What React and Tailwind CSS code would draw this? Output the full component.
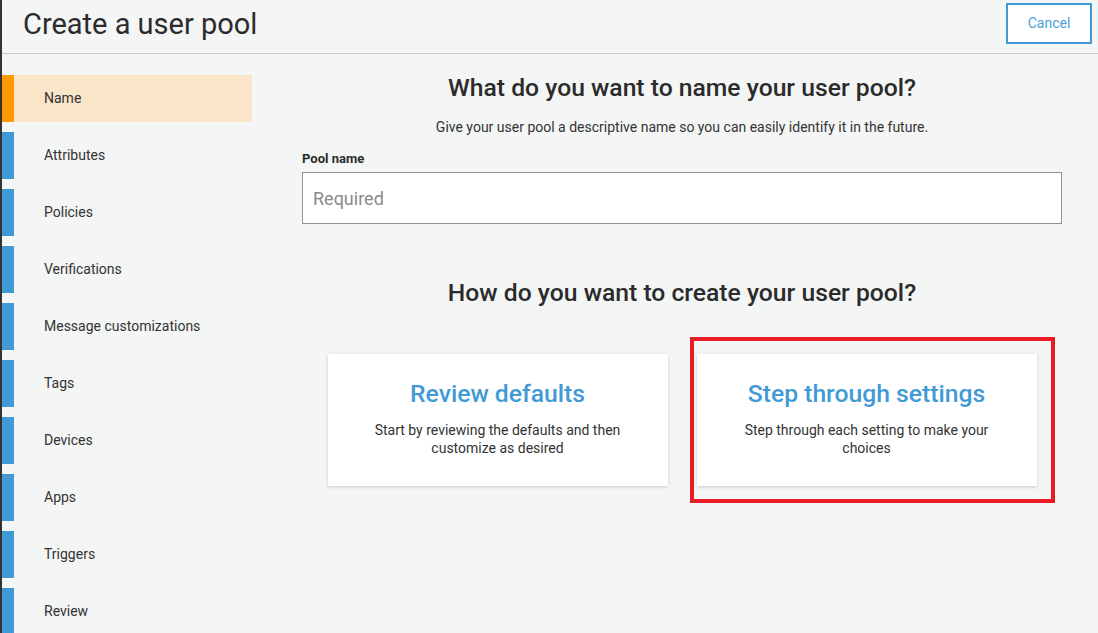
import React from 'react';

const steps = [
    'Name',
    'Attributes',
    'Policies',
    'Verifications',
    'Message customizations',
    'Tags',
    'Devices',
    'Apps',
    'Triggers',
    'Review',
];

const StepItem = ({ label, active }) => (
    <div className={`flex h-[47px] shrink-0 ${active ? 'bg-[#f9e5c8]' : ''}`}>
        <div className={`w-[12px] ${active ? 'bg-[#ff9900]' : 'bg-[#3f9ad6]'}`} />
        <div className="flex items-center pl-[30px] text-[14px] text-[#333333]">{label}</div>
    </div>
);

const OptionCard = ({ title, text }) => (
    <div className="w-[340px] h-[132px] bg-white shadow-[0_1px_3px_rgba(0,0,0,0.18)] flex flex-col items-center pt-[26px] text-center">
        <div className="text-[24.7px] leading-[28px] font-medium text-[#3f9ad6]">{title}</div>
        <p className="mt-[13px] w-[270px] text-[14px] leading-[18px] text-[#333333]">{text}</p>
    </div>
);

const App = () => {
    return (
        <div className="w-[1098px] h-[633px] overflow-hidden bg-[#f4f5f5] border-l-2 border-[#333333] font-['Roboto','Liberation_Sans',sans-serif]">
            <header className="h-[54px] flex items-start justify-between border-b border-[#cccccc] pl-[21px] pr-[6px]">
                <h1 className="mt-[6px] text-[29px] leading-[36px] text-[#2b2b2b]">Create a user pool</h1>
                <button className="mt-[3px] w-[86px] h-[41px] bg-white border-2 border-[#3f9ad6] text-[14px] text-[#4a9fd8]">
                    Cancel
                </button>
            </header>

            <div className="flex">
                {/* left step list */}
                <nav className="w-[250px] mt-[21px] flex flex-col gap-[10px]">
                    {steps.map((s, i) => (
                        <StepItem key={s} label={s} active={i === 0} />
                    ))}
                </nav>

                <main className="pl-[50px] w-[810px] flex flex-col">
                    <h2 className="mt-[20px] text-center text-[24.7px] leading-[28px] font-medium text-[#2b2b2b]">
                        What do you want to name your user pool?
                    </h2>
                    <p className="mt-[16px] text-center text-[14px] leading-[18px] text-[#333333]">
                        Give your user pool a descriptive name so you can easily identify it in the future.
                    </p>
                    <label className="mt-[14px] text-[13px] leading-[18px] font-bold text-[#2b2b2b]">Pool name</label>
                    <input
                        className="mt-[4px] h-[52px] w-[760px] bg-white border border-[#8e9493] px-[10px] text-[18px] text-[#333333] placeholder:text-[#8a8a8a] outline-none"
                        placeholder="Required"
                    />

                    <h2 className="mt-[55px] text-center text-[24.7px] leading-[28px] font-medium text-[#2b2b2b]">
                        How do you want to create your user pool?
                    </h2>

                    <div className="mt-[47px] flex justify-center gap-[29px]">
                        <OptionCard
                            title="Review defaults"
                            text="Start by reviewing the defaults and then customize as desired"
                        />
                        <div className="relative">
                            <OptionCard
                                title="Step through settings"
                                text="Step through each setting to make your choices"
                            />
                            {/* highlight annotation */}
                            <div className="absolute -left-[7px] -top-[17px] w-[365px] h-[166px] border-4 border-[#e81c24] pointer-events-none" />
                        </div>
                    </div>
                </main>
            </div>
        </div>
    );
};

export default App;
